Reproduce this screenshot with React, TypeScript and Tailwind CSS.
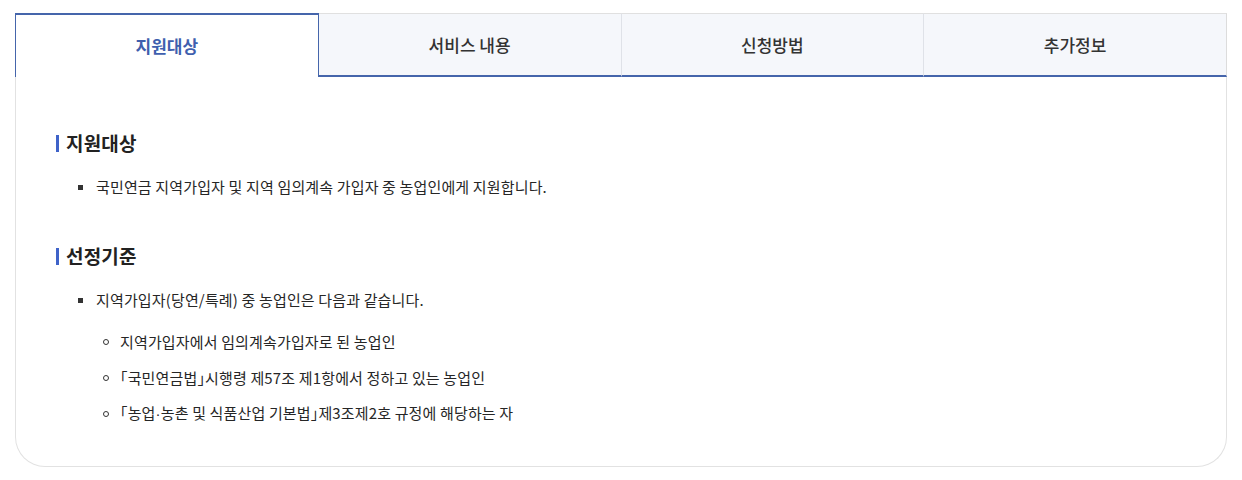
import { useState } from "react";

const tabs = ["지원대상", "서비스 내용", "신청방법", "추가정보"];

const font = { fontFamily: '"Noto Sans CJK KR", "Noto Sans", sans-serif' };

function Heading({ children, className = "" }: { children: React.ReactNode; className?: string }) {
  return (
    <h3 className={`flex items-center text-[19px] leading-[28px] font-bold text-[#222] ${className}`}>
      <span className="mr-[7px] inline-block h-[17px] w-[3px] bg-[#3f63c9]" />
      {children}
    </h3>
  );
}

export default function App() {
  const [active, setActive] = useState(0);

  return (
    <div className="bg-white px-[15px] pt-[13px] pb-[13px] [font-feature-settings:'halt']" style={font}>
      <div className="flex">
        {tabs.map((t, i) =>
          i === active ? (
            <button
              key={t}
              onClick={() => setActive(i)}
              className="flex h-[64px] flex-1 items-center justify-center border-x border-t-2 border-[#4565ab] bg-white text-[17px] font-bold text-[#3f5fae]"
            >
              {t}
            </button>
          ) : (
            <button
              key={t}
              onClick={() => setActive(i)}
              className={`flex h-[64px] flex-1 items-center justify-center border-t border-b-2 border-t-[#e0e0e0] border-b-[#4565ab] bg-[#f5f7fb] text-[17px] font-medium text-[#333] ${
                i < tabs.length - 1 ? "border-r border-r-[#dfe2e8]" : "border-r border-r-[#dcdcdc]"
              }`}
            >
              {t}
            </button>
          )
        )}
      </div>
      <div className="rounded-b-[30px] border-x border-b border-[#e2e2e2] px-[40px] pt-[52px] pb-[40px] text-[15px] leading-[24px] tracking-[0.15px] text-[#262626]">
        <Heading>지원대상</Heading>
        <ul className="mt-[18px]">
          <li className="flex items-center">
            <span className="mr-[13px] ml-[22px] inline-block h-[5px] w-[5px] bg-[#333]" />
            국민연금 지역가입자 및 지역 임의계속 가입자 중 농업인에게 지원합니다.
          </li>
        </ul>
        <Heading className="mt-[43px]">선정기준</Heading>
        <ul className="mt-[18px]">
          <li>
            <div className="flex items-center">
              <span className="mr-[13px] ml-[22px] inline-block h-[5px] w-[5px] bg-[#333]" />
              지역가입자(당연/특례) 중 농업인은 다음과 같습니다.
            </div>
            <ul className="mt-[18px] ml-[47px]">
              <li className="flex items-center">
                <span className="mr-[11px] inline-block h-[6px] w-[6px] rounded-full border border-[#333]" />
                지역가입자에서 임의계속가입자로 된 농업인
              </li>
              <li className="mt-[12px] flex items-center">
                <span className="mr-[11px] inline-block h-[6px] w-[6px] rounded-full border border-[#333]" />
                「국민연금법」시행령 제57조 제1항에서 정하고 있는 농업인
              </li>
              <li className="mt-[11px] flex items-center">
                <span className="mr-[11px] inline-block h-[6px] w-[6px] rounded-full border border-[#333]" />
                <span>
                  「농업<span className="font-['Liberation_Sans']">·</span>농촌 및 식품산업 기본법」제3조제2호 규정에 해당하는 자
                </span>
              </li>
            </ul>
          </li>
        </ul>
      </div>
    </div>
  );
}
